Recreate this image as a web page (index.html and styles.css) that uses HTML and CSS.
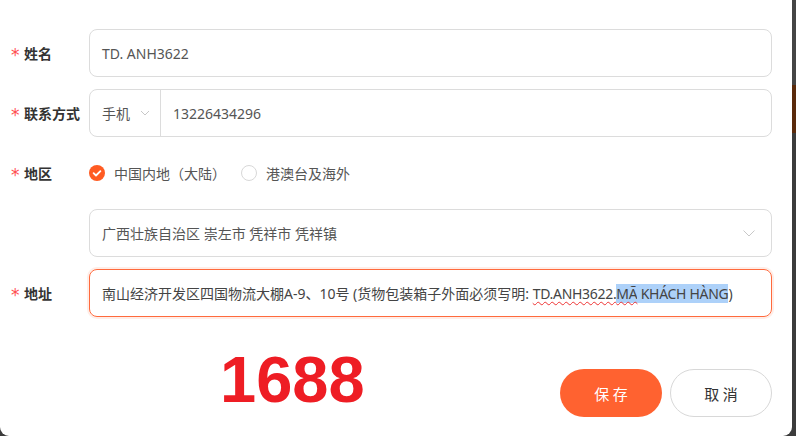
FILE: index.html
```html
<!DOCTYPE html>
<html lang="zh-CN">
<head>
  <meta charset="UTF-8">
  <title>编辑收货地址</title>
  <link rel="stylesheet" href="styles.css">
</head>
<body>
  <div class="dialog">
    <form class="address-form">
      <div class="form-row">
        <label class="form-label"><span class="req">*</span>姓名</label>
        <div class="field"><span>TD. ANH3622</span></div>
      </div>

      <div class="form-row">
        <label class="form-label"><span class="req">*</span>联系方式</label>
        <div class="field field-phone">
          <div class="phone-type">手机
            <svg class="chev-sm" viewBox="0 0 10 6" width="10" height="6"><path d="M1 1l4 4 4-4" fill="none" stroke="#c8c8c8" stroke-width="1"/></svg>
          </div>
          <div class="phone-number">13226434296</div>
        </div>
      </div>

      <div class="form-row">
        <label class="form-label"><span class="req">*</span>地区</label>
        <div class="radios">
          <span class="radio checked">
            <svg viewBox="0 0 16 16" width="16" height="16"><circle cx="8" cy="8" r="8" fill="#ff5b22"/><path d="M4.6 8.2l2.4 2.3 4.4-4.4" fill="none" stroke="#fff" stroke-width="1.8" stroke-linecap="round" stroke-linejoin="round"/></svg>
            <span>中国内地（大陆）</span>
          </span>
          <span class="radio">
            <i class="radio-dot"></i>
            <span>港澳台及海外</span>
          </span>
        </div>
      </div>

      <div class="form-row">
        <span class="form-label"></span>
        <div class="field field-select">
          <span>广西壮族自治区 崇左市 凭祥市 凭祥镇</span>
          <svg class="chev" viewBox="0 0 12 7" width="12" height="7"><path d="M0.5 0.5l5.5 5.5 5.5-5.5" fill="none" stroke="#c8c8c8" stroke-width="1"/></svg>
        </div>
      </div>

      <div class="form-row">
        <label class="form-label"><span class="req">*</span>地址</label>
        <div class="field field-focus"><span>南山经济开发区四国物流大棚A-9、10号 (货物包装箱子外面必须写明: <span class="latin"><span class="typo">TD.ANH3622.<span class="sel">MÃ</span></span><span class="sel"> KHÁCH HÀNG</span>)</span></span></div>
      </div>

      <div class="form-footer">
        <div class="brand">1688</div>
        <button type="button" class="btn btn-primary">保 存</button>
        <button type="button" class="btn btn-default">取 消</button>
      </div>
    </form>
  </div>
</body>
</html>
```

FILE: styles.css
```css
html, body {
  margin: 0;
  height: 100%;
}
body {
  background: linear-gradient(#454545 0, #454545 85px, #5a2a0b 85px, #5a2a0b 133px, #3c3c3c 133px);
  font-family: "Noto Sans", "Noto Sans CJK SC", sans-serif;
  font-size: 14px;
  color: #333;
  overflow: hidden;
}
.dialog {
  width: 792px;
  height: 436px;
  background: #fff;
  border-radius: 0 0 9px 9px;
  box-sizing: border-box;
  padding: 29px 20px 0 0;
}
.address-form {
  display: flex;
  flex-direction: column;
  gap: 12px;
}
.form-row {
  display: grid;
  grid-template-columns: 89px 1fr;
  align-items: center;
  height: 48px;
}
.form-label {
  display: flex;
  align-items: center;
  font-weight: bold;
  color: #333;
  padding-left: 11px;
  font-size: 14px;
}
.req {
  color: #ff4d4f;
  font-weight: normal;
  width: 13px;
  font-family: "DejaVu Sans", sans-serif;
  font-size: 17px;
  line-height: 1;
  padding-top: 5px;
}
.field {
  height: 48px;
  box-sizing: border-box;
  border: 1px solid #dcdcdc;
  border-radius: 8px;
  padding: 0 12px;
  display: flex;
  align-items: center;
  color: #555;
  font-size: 14px;
  white-space: nowrap;
}
.field-phone {
  padding: 0;
}
.phone-type {
  width: 71px;
  height: 100%;
  box-sizing: border-box;
  border-right: 1px solid #dcdcdc;
  padding-left: 12px;
  display: flex;
  align-items: center;
  gap: 10px;
}
.phone-number {
  padding-left: 12px;
}
.radios {
  display: flex;
  align-items: center;
  gap: 15px;
  color: #555;
  font-size: 14px;
}
.radio {
  display: flex;
  align-items: center;
  gap: 9px;
}
.radio-dot {
  width: 14px;
  height: 14px;
  border: 1px solid #d8d8d8;
  border-radius: 50%;
}
.field-select {
  justify-content: space-between;
}
.chev {
  margin-right: 4px;
}
.field-focus {
  border-color: #ff6a3d;
  box-shadow: 0 0 0 2px rgba(255, 106, 61, 0.12);
  color: #444;
}
.latin {
  letter-spacing: -0.3px;
}
.typo {
  text-decoration: underline wavy #e33;
  text-decoration-thickness: 1px;
  text-underline-offset: 2px;
}
.sel {
  background: #add1f9;
}
.form-footer {
  display: flex;
  align-items: flex-start;
  margin-top: 18px;
  padding-left: 220px;
}
.brand {
  font-family: "Liberation Sans", Arial, sans-serif;
  font-weight: bold;
  font-size: 65px;
  line-height: 66px;
  color: #ee1d24;
}
.btn {
  width: 102px;
  height: 48px;
  border-radius: 24px;
  font-family: "Noto Sans CJK SC", sans-serif;
  font-size: 15px;
  margin-top: 22px;
  cursor: pointer;
}
.btn-primary {
  margin-left: auto;
  background: #ff6230;
  border: none;
  color: #fff;
}
.btn-default {
  margin-left: 8px;
  background: #fff;
  border: 1px solid #d8d8d8;
  color: #333;
}
```
